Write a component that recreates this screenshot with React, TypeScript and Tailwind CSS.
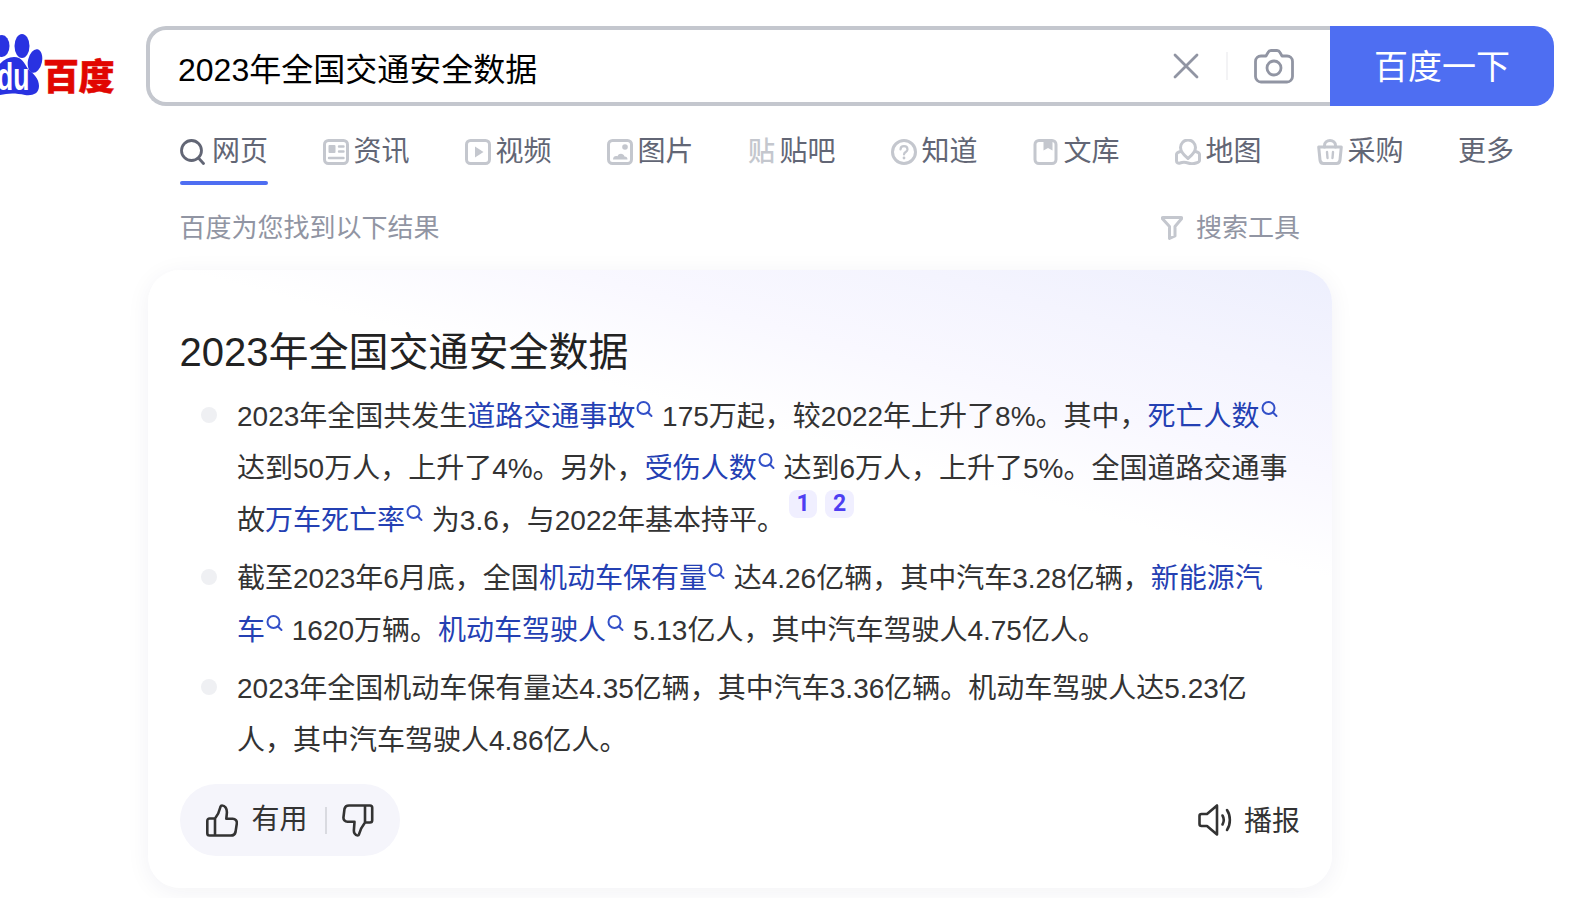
const S = "#c4c7ce";

function Ico({ children, w = 26, h = 26, className = "" }: { children: React.ReactNode; w?: number; h?: number; className?: string }) {
  return (
    <svg width={w} height={h} viewBox={`0 0 ${w} ${h}`} fill="none" stroke={S} strokeWidth={3} strokeLinecap="round" strokeLinejoin="round" className={`ml-[1px] ${className}`}>
      {children}
    </svg>
  );
}

const tabs: { label: string; icon: React.ReactNode }[] = [
  { label: "资讯", icon: <Ico><rect x="1.500" y="1.500" width="23" height="23" rx="4" /><rect x="5.500" y="6" width="7" height="8" rx="1" fill={S} stroke="none" /><path d="M16 7.500h4.500M16 12.500h4.500M6 19h14.500" strokeWidth={2.400} /></Ico> },
  { label: "视频", icon: <Ico><rect x="1.500" y="1.500" width="23" height="23" rx="4" /><path d="M10 7.500l8.500 5.500-8.500 5.500z" fill={S} stroke="none" /></Ico> },
  { label: "图片", icon: <Ico><rect x="1.500" y="1.500" width="23" height="23" rx="4" /><circle cx="18" cy="8" r="2.800" fill={S} stroke="none" /><path d="M6 20.500c0-3 2.500-4 4.500-3.200 1-3.300 6-3.300 7 .2 2 0 3 1 3 3z" fill={S} stroke="none" /></Ico> },
  { label: "贴吧", icon: <span className="text-[27px] leading-[26px] font-medium text-[#c4c7ce]">贴</span> },
  { label: "知道", icon: <Ico><circle cx="13" cy="13" r="11.500" /><path d="M9.500 10.500c0-2 1.600-3.300 3.500-3.300s3.500 1.300 3.500 3.200c0 2.600-3.500 2.600-3.500 5" strokeWidth={2.200} /><circle cx="13" cy="19" r="1.400" fill={S} stroke="none" /></Ico> },
  { label: "文库", icon: <Ico><rect x="2" y="1.500" width="21" height="23" rx="4" /><path d="M10.500 2h9v9.500l-4.500-2.500-4.500 2.500z" fill={S} stroke="none" /></Ico> },
  { label: "地图", icon: <Ico><path d="M5.500 12.500c-2 .5-4 1.200-4 3v6.500c0 1.800 1.800 2.500 3.500 2 2.500-1 5.500-1 8 0s5.500 1 8 0c1.700-.5 3.500-1 3.500-2.500v-6c0-1.800-2-2.500-4-3" /><path d="M13 19.500c-3-2.500-7.500-6-7.500-11a7.500 7.500 0 0 1 15 0c0 5-4.500 8.500-7.500 11z" fill="#fff" /></Ico> },
  { label: "采购", icon: <Ico><path d="M7.500 8V6.500a5.500 5 0 0 1 11 0V8" /><path d="M1.700 8h22.600l-1.300 13c-.2 2-1.500 3.500-3.500 3.500H6.500c-2 0-3.300-1.500-3.500-3.500z" /><path d="M10 13l.5 6M16 13l-.5 6" strokeWidth={2.400} /></Ico> },
];

function Hint() {
  return (
    <svg width="17" height="17" viewBox="0 0 17 17" fill="none" stroke="#3350c8" strokeWidth="2" strokeLinecap="round" className="inline-block align-[8px] ml-[1px] mr-[1px]">
      <circle cx="7.500" cy="7" r="6" />
      <path d="M12 11.500l3.500 3.500" />
    </svg>
  );
}

function L({ children, end }: { children?: React.ReactNode; end: string }) {
  return (
    <span className="text-[#2440b3]">
      {children}
      <span className="whitespace-nowrap">
        {end}
        <Hint />
      </span>
    </span>
  );
}

function Badge({ n, first }: { n: string; first?: boolean }) {
  return (
    <span className={`inline-block h-[28px] -mt-[14px] rounded-lg bg-[#f0efff] text-[#4e3ef2] text-[23px] leading-[28px] text-center font-bold align-[19px] ${first ? "w-[28px] ml-[4px]" : "w-[29px] ml-[8px]"}`} style={{ fontFamily: "Roboto, sans-serif" }}>
      {n}
    </span>
  );
}

function Item({ children, className = "" }: { children: React.ReactNode; className?: string }) {
  return (
    <div className={`flex ${className}`}>
      <div className="w-[57px] shrink-0 pl-[21px] pt-[16px]">
        <div className="w-4 h-4 rounded-full bg-[#eff0f3]" />
      </div>
      <p className="text-[28px] leading-[52.200px] text-[#333333] w-[1063px]">{children}</p>
    </div>
  );
}

export default function App() {
  return (
    <div className="w-[1575px] h-[898px] overflow-hidden bg-white" style={{ fontFamily: '"Liberation Sans", "Noto Sans CJK SC", sans-serif' }}>
      <header className="flex pt-[26px]">
        <div className="w-[146px] shrink-0 flex items-start pt-[7px]">
          <svg width="44" height="65" viewBox="0 0 44 65" className="shrink-0">
            <g fill="#2932e1">
              <ellipse cx="22" cy="13" rx="7.500" ry="12" />
              <ellipse cx="2" cy="13" rx="7.500" ry="11" />
              <ellipse cx="35" cy="28" rx="7" ry="12" transform="rotate(12 35 28)" />
              <path d="M-14 62 C-22 50 -8 36 -2 33 C3 27 8 24 14 24 C22 24 24 30 28 36 C34 41 39 46 39 53 C39 61 32 63 25 62 C16 60 8 60 0 62 C-6 64 -12 64 -14 62z" />
            </g>
            <text transform="translate(-3 57) scale(0.7 1)" fill="#fff" fontSize="38" fontWeight="700" fontFamily='"Liberation Sans", sans-serif'>du</text>
          </svg>
          <span className="text-[36px] leading-[36px] font-black text-[#e10601] mt-[27px] -ml-[1px] -tracking-[0.500px] whitespace-nowrap [-webkit-text-stroke:0.500px_#e10601]">百度</span>
        </div>
        <div className="flex-none w-[1184px] h-[80px] border-4 border-r-0 border-[#c4c7ce] rounded-l-[20px] flex items-center pl-[28px] pr-[36px] bg-white">
          <span className="text-[32px] text-black flex-1 mt-[8px]">2023年全国交通安全数据</span>
          <svg width="26" height="26" viewBox="0 0 26 26" fill="none" stroke="#9195a3" strokeWidth="2.800" strokeLinecap="round" className="mr-[27px]">
            <path d="M2 2l22 22M24 2L2 24" />
          </svg>
          <div className="w-[2px] h-[28px] bg-[#f3f3f5] mr-[26px]" />
          <svg width="40" height="35" viewBox="0 0 40 35" fill="none" stroke="#9195a3" strokeWidth="2.800" strokeLinejoin="round">
            <path d="M12 7l2-3.500c.6-1.200 1.500-2 3-2h6c1.500 0 2.400.8 3 2L28 7h5c3 0 5.500 2.400 5.500 5.500v15c0 3-2.500 5.500-5.500 5.500H7c-3 0-5.500-2.500-5.500-5.500v-15C1.500 9.400 4 7 7 7z" />
            <circle cx="20" cy="19" r="7" />
          </svg>
        </div>
        <button className="w-[224px] h-[80px] pt-[2px] bg-[#4e6ef2] rounded-r-[20px] text-white text-[34px] flex items-center justify-center">百度一下</button>
      </header>

      <nav className="flex items-start ml-[180px] mt-[27px] gap-[54px] text-[28px] leading-[38px] text-[#626675] whitespace-nowrap">
        <div className="w-[88px] shrink-0">
          <div className="flex items-center gap-[7px]">
            <svg width="25" height="26" viewBox="0 0 25 26" fill="none" stroke="#626675" strokeWidth="2.800" strokeLinecap="round">
              <circle cx="11.500" cy="11.500" r="10" />
              <path d="M18.500 19l5 5.500" />
            </svg>
            <span>网页</span>
          </div>
          <div className="h-[4px] mt-[10px] rounded-sm bg-[#4e6ef2]" />
        </div>
        {tabs.map((t) => (
          <div key={t.label} className="w-[88px] shrink-0 flex items-center gap-[4.500px]">
            {t.icon}
            <span>{t.label}</span>
          </div>
        ))}
        <div className="shrink-0">更多</div>
      </nav>

      <div className="flex items-center justify-between w-[1120px] ml-[180px] mt-[23px] text-[26px] leading-[40px] text-[#9195a3]">
        <span className="-ml-[0.500px]">百度为您找到以下结果</span>
        <span className="flex items-center gap-[13px]">
          <svg width="22" height="24" viewBox="0 0 22 24" fill="none" stroke={S} strokeWidth="3" strokeLinejoin="round" strokeLinecap="round">
            <path d="M2 1.500h18c.8 0 1 .7.500 1.300L14 10.500V20l-5.500 2.500v-12L1.500 2.800C1 2.200 1.200 1.500 2 1.500z" />
          </svg>
          <span>搜索工具</span>
        </span>
      </div>

      <main className="w-[1184px] ml-[148px] mt-[22px] rounded-[32px] pt-[58px] px-[32px] pb-[32px] shadow-[0_4px_24px_rgba(30,40,90,0.06)] bg-[linear-gradient(195deg,#edeffd_0%,#f4f4fe_12%,#f9f8ff_22%,#ffffff_33%)]">
        <h1 className="text-[40px] leading-[48px] text-[#222222] font-normal -ml-[0.500px]">2023年全国交通安全数据</h1>
        <div className="mt-[15px] flex flex-col">
          <Item>
            2023年全国共发生<L end="故">道路交通事</L> 175万起，较2022年上升了8%。其中，<L end="数">死亡人</L> 达到50万人，上升了4%。另外，<L end="数">受伤人</L> 达到6万人，上升了5%。全国道路交通事故<L end="率">万车死亡</L> 为3.6，与2022年基本持平。
            <Badge n="1" first />
            <Badge n="2" />
          </Item>
          <Item className="mt-[5px]">
            截至2023年6月底，全国<L end="量">机动车保有</L> 达4.26亿辆，其中汽车3.28亿辆，<L end="车">新能源汽</L> 1620万辆。<L end="人">机动车驾驶</L> 5.13亿人，其中汽车驾驶人4.75亿人。
          </Item>
          <Item className="mt-[6px]">
            2023年全国机动车保有量达4.35亿辆，其中汽车3.36亿辆。机动车驾驶人达5.23亿人，其中汽车驾驶人4.86亿人。
          </Item>
        </div>
        <div className="mt-[17px] flex items-center justify-between">
          <div className="w-[220px] h-[72px] rounded-[36px] bg-[#f5f5fb] flex items-center pl-[26px] text-[28px] text-[#333333]">
            <svg width="32" height="33" viewBox="0 0 32 33" fill="none" stroke="#333" strokeWidth="2.600" strokeLinejoin="round" strokeLinecap="round">
              <path d="M9 14.500h-5.500c-1.200 0-2.200 1-2.200 2.200v12.600c0 1.200 1 2.200 2.200 2.200H25c2.300 0 4-1.200 4.500-3.400l1.300-8.500c.4-2.800-1.500-4.800-4-4.800h-6.500l.6-6.300C21 4.500 19 1.500 16 1.500c-.8 0-1.300.5-1.500 1.200-1 4.300-2.800 8.500-5.500 11.800zM9 14.500V31.500" />
            </svg>
            <span className="ml-[13.500px]">有用</span>
            <div className="w-[2px] h-[27px] bg-[#d9dae0] ml-[17.500px]" />
            <svg width="32" height="33" viewBox="0 0 32 33" fill="none" stroke="#333" strokeWidth="2.600" strokeLinejoin="round" strokeLinecap="round" className="ml-[15px]">
              <path d="M23 18.500h5c1.200 0 2.200-1 2.200-2.200V3.700c0-1.200-1-2.200-2.200-2.200H7C4.700 1.500 3 2.700 2.500 4.900L1.500 13c-.4 2.800 1.500 4.800 4 4.800h7l-.6 8.300C11.700 28.500 13 31.500 15.500 31.500c.8 0 1.300-.5 1.500-1.200 1-4 3.300-8.300 6-11.800zM23 18.500V1.500" />
            </svg>
          </div>
          <div className="flex items-center text-[28px] text-[#333333]">
            <svg width="35" height="32" viewBox="0 0 35 32" fill="none" stroke="#333" strokeWidth="2.600" strokeLinejoin="round" strokeLinecap="round">
              <path d="M3.500 10H9L19 1.500V30.500L9 22H3.500C2.300 22 1.500 21 1.500 20V12C1.500 11 2.300 10 3.500 10z" />
              <path d="M24.500 11.500c1.600 2.800 1.600 6.200 0 9M29 6c3.800 5.500 3.800 14.500 0 20" />
            </svg>
            <span className="ml-[11px] mt-[4px]">播报</span>
          </div>
        </div>
      </main>
    </div>
  );
}
